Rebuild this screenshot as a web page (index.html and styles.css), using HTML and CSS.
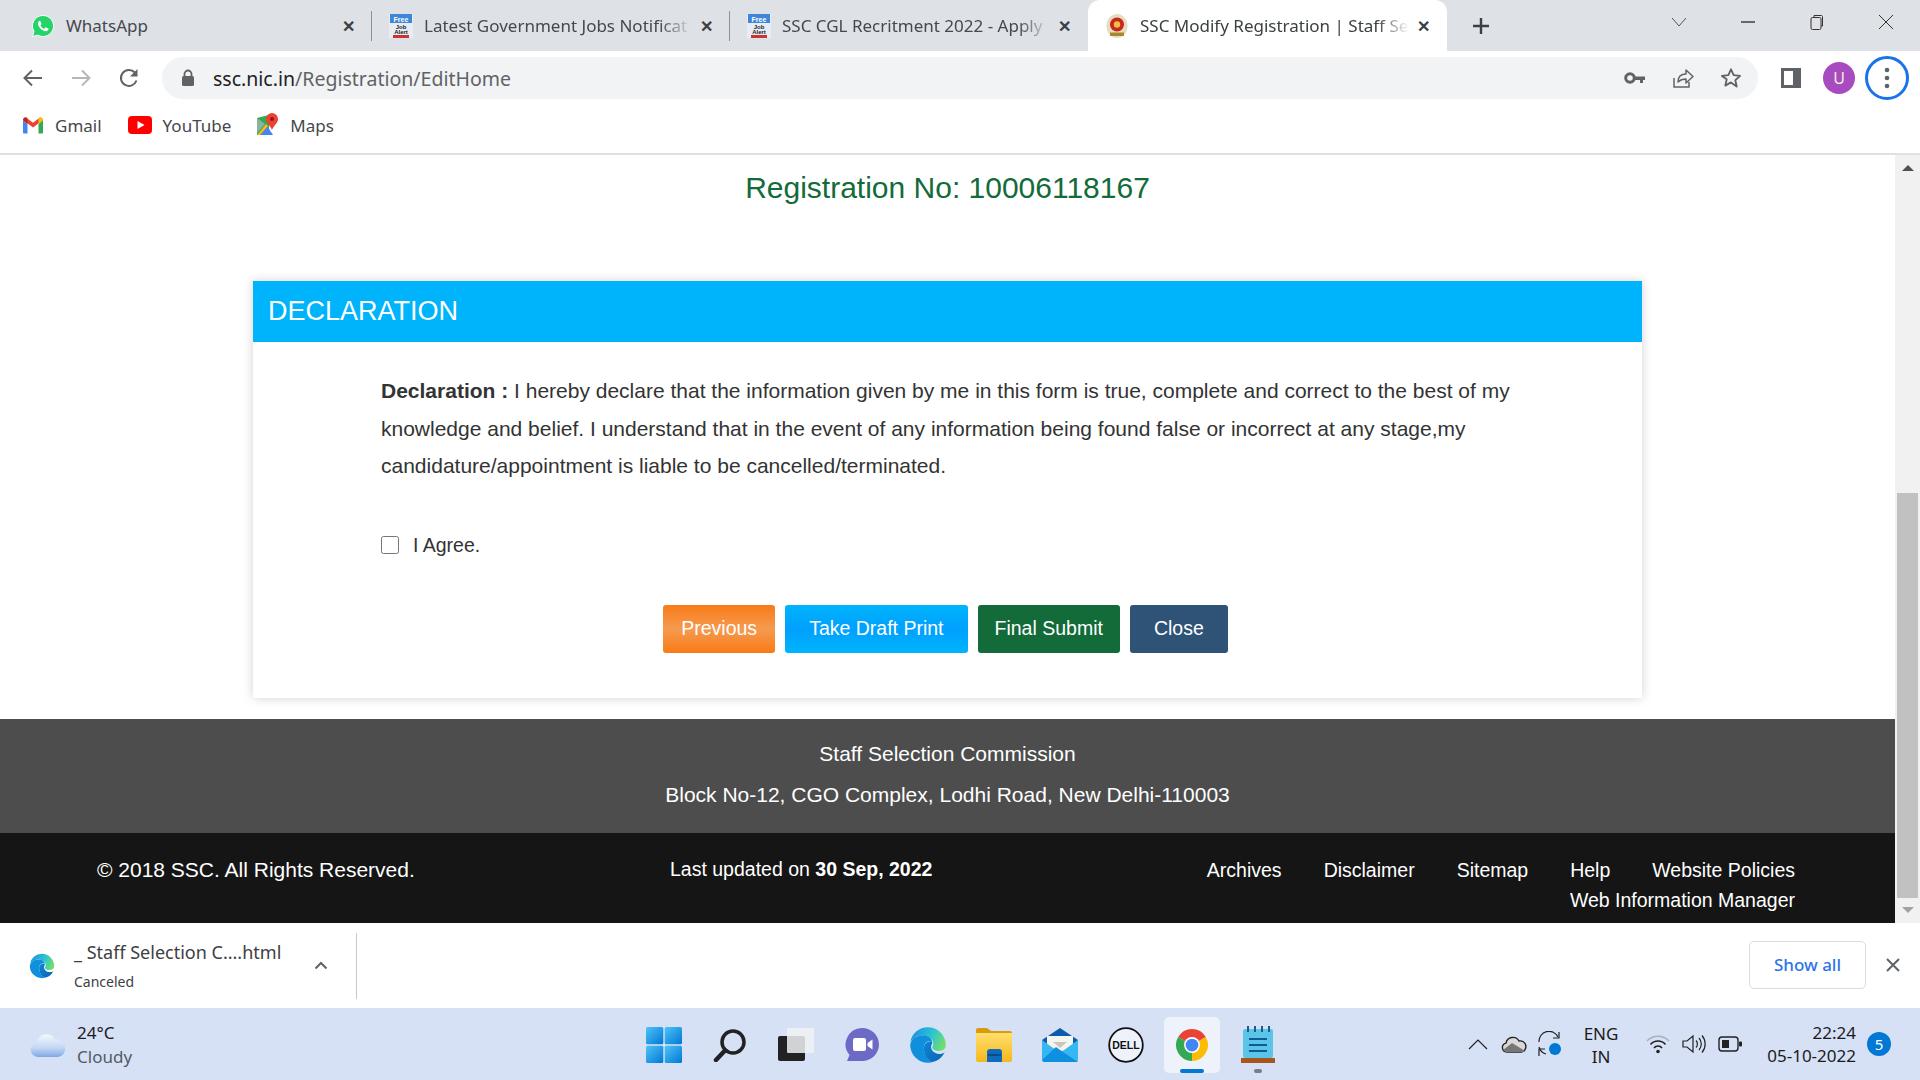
FILE: index.html
```html
<!DOCTYPE html>
<html lang="en">

<head>
    <meta charset="UTF-8">
    <meta name="viewport" content="width=device-width, initial-scale=1.0">
    <title>SSC Modify Registration</title>
    <link rel="stylesheet" href="styles.css">
</head>

<body>
    <svg class="defs" width="0" height="0">
        <defs>
            <linearGradient id="edgeA" x1="0" y1="0.3" x2="1" y2="0.6">
                <stop offset="0" stop-color="#1b8fe0" />
                <stop offset="0.55" stop-color="#2cc4d4" />
                <stop offset="1" stop-color="#72de6a" />
            </linearGradient>
            <linearGradient id="edgeB" x1="0" y1="0" x2="1" y2="1">
                <stop offset="0" stop-color="#0d86d8" />
                <stop offset="1" stop-color="#0b63b5" />
            </linearGradient>
            <linearGradient id="winBlue" x1="0" y1="0" x2="1" y2="1">
                <stop offset="0" stop-color="#4fc3f7" />
                <stop offset="1" stop-color="#0078d4" />
            </linearGradient>
            <linearGradient id="folderY" x1="0" y1="0" x2="0" y2="1">
                <stop offset="0" stop-color="#ffdf6e" />
                <stop offset="1" stop-color="#f5b81c" />
            </linearGradient>
            <linearGradient id="cloudB" x1="0" y1="0" x2="0" y2="1">
                <stop offset="0" stop-color="#f4f7fd" />
                <stop offset="0.6" stop-color="#c3d6f3" />
                <stop offset="1" stop-color="#7fa8e6" />
            </linearGradient>
            <symbol id="jobs" viewBox="0 0 24 24">
                <rect width="24" height="24" fill="#e8edf5" />
                <rect x="1" y="0" width="22" height="9" fill="#3d86d8" />
                <text x="12" y="7.500" text-anchor="middle" class="fav-free">Free</text>
                <text x="12" y="14.500" text-anchor="middle" class="fav-job">Job</text>
                <text x="12" y="20" text-anchor="middle" class="fav-job">Alert</text>
                <rect x="4" y="21" width="16" height="3" fill="#c33" />
            </symbol>
            <symbol id="edge" viewBox="0 0 32 32">
                <path d="M16 1A15 15 0 0 1 31 16c0 3-2 5-6 5-3 0-5-1.500-5.500-3 .5-1 1-2 1-3 0-4-4-7-9-7-5 0-9 3-10.500 6A15 15 0 0 1 16 1z" fill="url(#edgeA)" />
                <path d="M1 16C2 10 7 8 12 8c4 0 7 2 7.500 5-3-1-7 .5-7 6 0 5 3 9 6.500 11.500-1 .3-2 .5-3 .5A15 15 0 0 1 1 16z" fill="#0f8fdc" />
                <path d="M12.500 19c0-5 4-6.500 7-6 .5 2-1 3-1 4.500 0 3 3 6 7 6 2 0 3.500-.5 4.500-1.500A15 15 0 0 1 19 30.500C15 28 12.500 24 12.500 19z" fill="url(#edgeB)" />
            </symbol>
        </defs>
    </svg>

    <header class="tabstrip">
        <div class="tab">
            <svg class="favicon" viewBox="0 0 24 24">
                <path d="M12 1.500A10.500 10.500 0 0 0 3 17.400L1.500 22.500l5.300-1.400A10.500 10.500 0 1 0 12 1.500z" fill="#25d366" stroke="#fff" stroke-width="1" />
                <path d="M8.500 6.800c-.7.300-1.500 1.300-1.500 2.700 0 3 3.800 7.500 7.800 7.700 1.400 0 2.500-1 2.700-1.900.1-.5 0-.8-.2-.9l-2.200-1c-.3-.1-.5 0-.7.200l-.8 1c-.2.200-.4.200-.7.100-1.300-.5-2.600-1.600-3.300-2.900-.1-.3 0-.5.200-.7l.6-.8c.1-.2.100-.4 0-.6l-.9-2.300c-.2-.5-.5-.6-1-.6z" fill="#fff" />
            </svg>
            <span class="tab-title">WhatsApp</span>
            <span class="tab-close">✕</span>
        </div>
        <div class="tab">
            <svg class="favicon"><use href="#jobs" /></svg>
            <span class="tab-title fade">Latest Government Jobs Notificat</span>
            <span class="tab-close">✕</span>
        </div>
        <div class="tab no-sep">
            <svg class="favicon"><use href="#jobs" /></svg>
            <span class="tab-title fade">SSC CGL Recritment 2022 - Apply</span>
            <span class="tab-close">✕</span>
        </div>
        <div class="tab active">
            <svg class="favicon" viewBox="0 0 24 24">
                <ellipse cx="12" cy="12" rx="10.500" ry="12" fill="#e6dcc0" />
                <circle cx="12" cy="10.500" r="7" fill="#c8281e" />
                <circle cx="12" cy="10.500" r="3.200" fill="#f0c040" />
                <rect x="5" y="18.500" width="14" height="3.500" fill="#a8872f" />
            </svg>
            <span class="tab-title fade">SSC Modify Registration | Staff Se</span>
            <span class="tab-close">✕</span>
        </div>
        <div class="new-tab">
            <svg width="18" height="18" viewBox="0 0 18 18">
                <path d="M9 1v16M1 9h16" stroke="#3c4043" stroke-width="2.400" fill="none" />
            </svg>
        </div>
        <div class="win-controls">
            <div class="win-btn">
                <svg width="16" height="10" viewBox="0 0 16 10"><path d="M1 1l7 8 7-8" stroke="#555" stroke-width="1" fill="none" /></svg>
            </div>
            <div class="win-btn">
                <svg width="16" height="4" viewBox="0 0 16 4"><path d="M1 2h14" stroke="#333" stroke-width="1.400" /></svg>
            </div>
            <div class="win-btn">
                <svg width="16" height="16" viewBox="0 0 16 16">
                    <path d="M5 3V1.500h7.500a1.500 1.500 0 0 1 1 1V12H12" stroke="#333" fill="none" />
                    <rect x="2" y="3.500" width="10" height="12" rx="1.500" stroke="#333" fill="none" />
                </svg>
            </div>
            <div class="win-btn">
                <svg width="16" height="16" viewBox="0 0 16 16"><path d="M1 1l14 14M15 1L1 15" stroke="#333" stroke-width="1" /></svg>
            </div>
        </div>
    </header>

    <nav class="toolbar">
        <div class="nav-btn">
            <svg width="22" height="22" viewBox="0 0 22 22"><path d="M20 11H3M10 3.500L2.500 11l7.500 7.500" stroke="#5f6368" stroke-width="2" fill="none" /></svg>
        </div>
        <div class="nav-btn">
            <svg width="22" height="22" viewBox="0 0 22 22"><path d="M2 11h17M12 3.500l7.500 7.500-7.500 7.500" stroke="#b4b7bb" stroke-width="2" fill="none" /></svg>
        </div>
        <div class="nav-btn">
            <svg width="22" height="22" viewBox="0 0 22 22">
                <path d="M18.500 13.500A8 8 0 1 1 16.800 5.500" stroke="#5f6368" stroke-width="2" fill="none" />
                <path d="M19.500 2v7.500H12z" fill="#5f6368" />
            </svg>
        </div>
        <div class="omnibox">
            <svg class="lock" width="14" height="18" viewBox="0 0 14 18">
                <path d="M3.500 8V5a3.500 3.500 0 0 1 7 0v3" stroke="#5f6368" stroke-width="1.800" fill="none" />
                <rect x="1" y="7" width="12" height="10" rx="1.500" fill="#5f6368" />
            </svg>
            <span class="url"><span class="url-host">ssc.nic.in</span>/Registration/EditHome</span>
            <div class="omni-actions">
                <div class="omni-btn">
                    <svg width="22" height="14" viewBox="0 0 22 14">
                        <circle cx="6" cy="7" r="4.300" stroke="#5f6368" stroke-width="3" fill="none" />
                        <path d="M10 5.500h11v3.500h-2v3h-3V9h-6z" fill="#5f6368" />
                    </svg>
                </div>
                <div class="omni-btn">
                    <svg width="22" height="22" viewBox="0 0 22 22">
                        <path d="M2 11v9h15v-5" stroke="#5f6368" stroke-width="1.500" fill="none" />
                        <path d="M6 15c0-5 3-8 8-8V3l7 6.500-7 6.500v-4c-3 0-6 1-8 3z" stroke="#5f6368" stroke-width="1.500" fill="none" stroke-linejoin="round" />
                    </svg>
                </div>
                <div class="omni-btn">
                    <svg width="22" height="22" viewBox="0 0 24 24">
                        <path d="M12 2.500l2.900 6.400 7 .8-5.200 4.700 1.500 6.900L12 16.800l-6.200 3.500 1.500-6.900L2.100 9.700l7-.8z" stroke="#5f6368" stroke-width="2" fill="none" stroke-linejoin="round" />
                    </svg>
                </div>
            </div>
        </div>
        <div class="tool-right">
            <div class="tool-btn">
                <svg width="20" height="20" viewBox="0 0 20 20">
                    <rect x="1.500" y="1.500" width="17" height="17" stroke="#5f6368" stroke-width="3" fill="none" />
                    <rect x="12" y="1" width="7" height="18" fill="#5f6368" />
                </svg>
            </div>
            <div class="tool-btn"><span class="avatar">U</span></div>
            <div class="tool-btn">
                <span class="menu-ring">
                    <svg width="6" height="22" viewBox="0 0 6 22">
                        <circle cx="3" cy="3" r="2.300" fill="#5f6368" />
                        <circle cx="3" cy="11" r="2.300" fill="#5f6368" />
                        <circle cx="3" cy="19" r="2.300" fill="#5f6368" />
                    </svg>
                </span>
            </div>
        </div>
    </nav>

    <div class="bookmarks">
        <div class="bookmark">
            <svg width="22" height="18" viewBox="0 0 22 18">
                <path d="M1 4v12.500a1 1 0 0 0 1 1h3.500V8z" fill="#4285f4" />
                <path d="M21 4v12.500a1 1 0 0 1-1 1h-3.500V8z" fill="#34a853" />
                <path d="M1 4l10 7.500L21 4l-3-2.500-7 5.300-7-5.300z" fill="#ea4335" />
                <path d="M1 4c0-2 2-3.500 3.500-2.500L5.500 2.500V8z" fill="#c5221f" />
                <path d="M21 4c0-2-2-3.500-3.500-2.500l-1 1V8z" fill="#fbbc04" />
            </svg>
            <span>Gmail</span>
        </div>
        <div class="bookmark">
            <svg width="24" height="18" viewBox="0 0 24 18">
                <rect width="24" height="18" rx="4" fill="#f00" />
                <path d="M9.500 5l7 4-7 4z" fill="#fff" />
            </svg>
            <span>YouTube</span>
        </div>
        <div class="bookmark">
            <svg width="22" height="24" viewBox="0 0 22 24">
                <path d="M0 5l12-3v20L0 22z" fill="#34a853" />
                <path d="M0 22l9-11 7 11z" fill="#4285f4" />
                <path d="M0 22L9 11 11 13 3 22z" fill="#fbbc04" />
                <path d="M0 5l8 6-8 9z" fill="#8ab4a0" />
                <path d="M15 0a6 6 0 0 1 6 6c0 4-4 6-6 11-2-5-6-7-6-11a6 6 0 0 1 6-6z" fill="#ea4335" />
                <circle cx="15" cy="6" r="2" fill="#a50e0e" />
            </svg>
            <span>Maps</span>
        </div>
    </div>

    <div class="viewport">
        <main class="page">
            <h2 class="reg-no">Registration No: 10006118167</h2>
            <section class="card">
                <h3 class="card-head">DECLARATION</h3>
                <div class="card-body">
                    <p class="declare"><b>Declaration :</b> I hereby declare that the information given by me in this form is true, complete and correct to the best of my knowledge and belief. I understand that in the event of any information being found false or incorrect at any stage,my candidature/appointment is liable to be cancelled/terminated.</p>
                    <label class="agree"><input type="checkbox"> I Agree.</label>
                    <div class="actions">
                        <a class="btn btn-orange">Previous</a>
                        <a class="btn btn-blue">Take Draft Print</a>
                        <a class="btn btn-green">Final Submit</a>
                        <a class="btn btn-navy">Close</a>
                    </div>
                </div>
            </section>
            <footer>
                <div class="address">
                    <div>Staff Selection Commission</div>
                    <div>Block No-12, CGO Complex, Lodhi Road, New Delhi-110003</div>
                </div>
                <div class="copyright">
                    <div>© 2018 SSC. All Rights Reserved.</div>
                    <div class="updated">Last updated on <b>30 Sep, 2022</b></div>
                    <div class="links">
                        <a>Archives</a>
                        <a>Disclaimer</a>
                        <a>Sitemap</a>
                        <a>Help</a>
                        <a>Website Policies</a>
                        <a>Web Information Manager</a>
                    </div>
                </div>
            </footer>
        </main>
        <div class="scrollbar">
            <span class="arrow-up"></span>
            <div class="track"><div class="thumb"></div></div>
            <span class="arrow-down"></span>
        </div>
    </div>

    <div class="downloads">
        <div class="dl-item">
            <svg width="26" height="26"><use href="#edge" /></svg>
            <div class="dl-text">
                <div class="dl-name">_ Staff Selection C....html</div>
                <div class="dl-status">Canceled</div>
            </div>
            <svg class="dl-caret" width="14" height="9" viewBox="0 0 14 9"><path d="M1.500 7.500L7 2l5.500 5.500" stroke="#5f6368" stroke-width="2" fill="none" /></svg>
        </div>
        <button class="show-all">Show all</button>
        <svg class="dl-close" width="14" height="14" viewBox="0 0 14 14"><path d="M1 1l12 12M13 1L1 13" stroke="#5f6368" stroke-width="2" /></svg>
    </div>

    <div class="taskbar">
        <div class="weather">
            <svg width="38" height="26" viewBox="0 0 38 26">
                <path d="M9 25a7.500 7.500 0 0 1-1.500-14.800A10 10 0 0 1 26 7.500a8.800 8.800 0 0 1 3 17.500z" fill="url(#cloudB)" />
            </svg>
            <div>
                <div class="temp">24°C</div>
                <div class="sky">Cloudy</div>
            </div>
        </div>
        <div class="apps">
            <div class="app">
                <svg width="36" height="36" viewBox="0 0 36 36">
                    <rect x="0" y="0" width="17.300" height="17.300" rx="1.500" fill="url(#winBlue)" />
                    <rect x="18.700" y="0" width="17.300" height="17.300" rx="1.500" fill="url(#winBlue)" />
                    <rect x="0" y="18.700" width="17.300" height="17.300" rx="1.500" fill="url(#winBlue)" />
                    <rect x="18.700" y="18.700" width="17.300" height="17.300" rx="1.500" fill="url(#winBlue)" />
                </svg>
            </div>
            <div class="app">
                <svg width="34" height="34" viewBox="0 0 34 34">
                    <circle cx="20" cy="14" r="11" stroke="#222" stroke-width="3.500" fill="none" />
                    <path d="M12 22.500L3 32" stroke="#222" stroke-width="4.500" stroke-linecap="round" />
                </svg>
            </div>
            <div class="app">
                <svg width="36" height="36" viewBox="0 0 36 36">
                    <rect x="0" y="9" width="27" height="25" rx="2" fill="#222" />
                    <rect x="9" y="1" width="27" height="25" rx="1" fill="#f0f1f3" fill-opacity="0.85" />
                </svg>
            </div>
            <div class="app">
                <svg width="36" height="36" viewBox="0 0 36 36">
                    <path d="M18 1a17 16.500 0 0 1 0 33H3l2.500-6A17 16.500 0 0 1 18 1z" fill="#6d69c7" />
                    <rect x="9" y="11" width="13" height="13" rx="2" fill="#fff" />
                    <path d="M23.500 16l5-3.500v10l-5-3.500z" fill="#fff" />
                </svg>
            </div>
            <div class="app">
                <svg width="38" height="38"><use href="#edge" /></svg>
            </div>
            <div class="app">
                <svg width="36" height="34" viewBox="0 0 36 34">
                    <path d="M0 2a2 2 0 0 1 2-2h9l4 3h19a2 2 0 0 1 2 2v4H0z" fill="#d99a0b" />
                    <path d="M0 5h36v27a2 2 0 0 1-2 2H2a2 2 0 0 1-2-2z" fill="url(#folderY)" />
                    <path d="M11 24a3 3 0 0 1 3-3h9a3 3 0 0 1 3 3v10H11z" fill="#0f6cbd" />
                    <rect x="12" y="26" width="13" height="2" fill="#0b4a8a" />
                </svg>
            </div>
            <div class="app">
                <svg width="36" height="34" viewBox="0 0 36 34">
                    <path d="M0 12L18 0l18 12v4H0z" fill="#0b5cab" />
                    <path d="M5 8h26v14H5z" fill="#f5f5f0" />
                    <path d="M11 14h14l-7 6z" fill="#c9c6bb" />
                    <path d="M0 12l18 13 18-13v20a2 2 0 0 1-2 2H2a2 2 0 0 1-2-2z" fill="#35b8f2" />
                    <path d="M0 32l14-13 4 3 18 12H2z" fill="#0f8fe0" />
                </svg>
            </div>
            <div class="app">
                <svg width="36" height="36" viewBox="0 0 36 36">
                    <circle cx="18" cy="18" r="16.800" stroke="#111" stroke-width="1.800" fill="#eef2fb" />
                    <text x="18" y="22" text-anchor="middle" class="dell-text">DELL</text>
                </svg>
            </div>
            <div class="app app-on">
                <svg width="34" height="34" viewBox="0 0 32 32">
                    <path d="M16 16L3 8.500A15 15 0 0 1 29 8.500z" fill="#ea4335" />
                    <path d="M16 16L29 8.500A15 15 0 0 1 16 31z" fill="#fbbc04" />
                    <path d="M16 16L16 31A15 15 0 0 1 3 8.500z" fill="#34a853" />
                    <circle cx="16" cy="16" r="7.500" fill="#fff" />
                    <circle cx="16" cy="16" r="6" fill="#4285f4" />
                </svg>
                <span class="app-bar"></span>
            </div>
            <div class="app app-run">
                <svg width="34" height="38" viewBox="0 0 34 38">
                    <rect x="2" y="3" width="30" height="29" rx="2" fill="#5ac5e8" />
                    <path d="M7 0v6M14 0v6M21 0v6M28 0v6" stroke="#1d5c86" stroke-width="2" />
                    <path d="M8 13h18M8 19h18M8 25h18" stroke="#0d5d92" stroke-width="2.200" />
                    <rect x="0" y="32" width="34" height="5" fill="#a8561c" />
                </svg>
                <span class="app-dot"></span>
            </div>
        </div>
        <div class="tray">
            <div class="tray-icon">
                <svg width="20" height="11" viewBox="0 0 20 11"><path d="M1 10l9-9 9 9" stroke="#222" stroke-width="1.200" fill="none" /></svg>
            </div>
            <div class="tray-icon">
                <svg width="26" height="18" viewBox="0 0 26 18">
                    <path d="M6 17a4.500 4.500 0 0 1-1-8.900A7 7 0 0 1 18 6a5.600 5.600 0 0 1 2.500 11z" fill="#d9d9d9" stroke="#222" stroke-width="1.400" />
                    <path d="M2 15l9-7 5 3 8 5v1H5z" fill="#777" />
                </svg>
            </div>
            <div class="tray-icon">
                <svg width="26" height="26" viewBox="0 0 26 26">
                    <path d="M2 11A10 10 0 0 1 21 6" stroke="#222" stroke-width="1.200" fill="none" />
                    <path d="M22 1v6h-6" stroke="#222" stroke-width="1.200" fill="none" />
                    <path d="M2 16a10 10 0 0 0 7 7" stroke="#222" stroke-width="1.200" fill="none" />
                    <path d="M2 25v-7h6" stroke="#222" stroke-width="1.200" fill="none" />
                    <circle cx="18" cy="18" r="6" fill="#0078d4" />
                </svg>
            </div>
            <div class="lang">ENG<br>IN</div>
            <div class="tray-icon">
                <svg width="24" height="20" viewBox="0 0 24 20">
                    <path d="M1 7a15 15 0 0 1 22 0" stroke="#aab0bb" stroke-width="1.500" fill="none" />
                    <path d="M4.500 10.500a10 10 0 0 1 15 0M8 14a5 5 0 0 1 8 0" stroke="#222" stroke-width="1.500" fill="none" />
                    <circle cx="12" cy="17.500" r="1.800" fill="#222" />
                </svg>
            </div>
            <div class="tray-icon">
                <svg width="24" height="20" viewBox="0 0 24 20">
                    <path d="M1 7h4l6-5v16l-6-5H1z" stroke="#222" stroke-width="1.200" fill="none" />
                    <path d="M14 6.500a5 5 0 0 1 0 7M17 4a9 9 0 0 1 0 12M20 1.500a13 13 0 0 1 0 17" stroke="#222" stroke-width="1.200" fill="none" />
                </svg>
            </div>
            <div class="tray-icon">
                <svg width="24" height="16" viewBox="0 0 24 16">
                    <rect x="1" y="1" width="19" height="14" rx="3" stroke="#222" stroke-width="1.400" fill="none" />
                    <rect x="4" y="4" width="7" height="8" fill="#222" />
                    <rect x="21" y="5.500" width="3" height="5" rx="1" fill="#222" />
                </svg>
            </div>
            <div class="clock">22:24<br>05-10-2022</div>
            <span class="badge">5</span>
        </div>
    </div>
</body>

</html>
```

FILE: styles.css
```css
* {
    box-sizing: border-box;
}

body {
    margin: 0;
    height: 1080px;
    overflow: hidden;
    display: flex;
    flex-direction: column;
    font-family: "Liberation Sans", Arial, sans-serif;
    background-color: #fff;
    color: #333;
}

.defs {
    position: absolute;
}

svg {
    display: block;
    flex-shrink: 0;
}

/* browser chrome */
.tabstrip {
    height: 51px;
    flex-shrink: 0;
    display: flex;
    padding-left: 14px;
    background-color: #dee1e6;
    font-family: "Noto Sans", sans-serif;
}

.tab {
    position: relative;
    width: 358px;
    display: flex;
    align-items: center;
    padding: 0 14px 0 17px;
    font-size: 17px;
    color: #45484c;
}

.tab::after {
    content: "";
    position: absolute;
    right: 0;
    top: 11px;
    bottom: 10px;
    width: 1px;
    background-color: #8f9398;
}

.tab.no-sep::after,
.tab.active::after {
    display: none;
}

.tab.active {
    width: 359px;
    background-color: #fff;
    border-radius: 12px 12px 0 0;
    color: #3c4043;
}

.favicon {
    width: 24px;
    height: 24px;
}

.tab-title {
    flex: 1;
    min-width: 0;
    margin: 0 4px 0 11px;
    white-space: nowrap;
    overflow: hidden;
}

.tab-title.fade {
    -webkit-mask-image: linear-gradient(to right, #000 88%, transparent 100%);
    mask-image: linear-gradient(to right, #000 88%, transparent 100%);
}

.fav-free {
    font-family: "Liberation Sans", sans-serif;
    font-size: 7px;
    font-weight: bold;
    fill: #fff;
}

.fav-job {
    font-family: "Liberation Sans", sans-serif;
    font-size: 6px;
    font-weight: bold;
    fill: #222;
}

.dell-text {
    font-family: "Liberation Sans", sans-serif;
    font-size: 10.500px;
    font-weight: bold;
    fill: #111;
}

.tab-close {
    width: 20px;
    text-align: center;
    font-size: 16px;
    font-weight: bold;
    color: #3c4043;
}

.new-tab {
    width: 32px;
    margin-left: 18px;
    display: flex;
    align-items: center;
    justify-content: center;
}

.win-controls {
    margin-left: auto;
    display: flex;
}

.win-btn {
    width: 69px;
    height: 44px;
    display: flex;
    align-items: center;
    justify-content: center;
}

.toolbar {
    height: 57px;
    flex-shrink: 0;
    display: flex;
    align-items: center;
    padding: 6px 0 9px 13px;
}

.nav-btn {
    width: 40px;
    margin-right: 8px;
    display: flex;
    justify-content: center;
}

.omnibox {
    width: 1596px;
    height: 42px;
    margin-left: 5px;
    display: flex;
    align-items: center;
    padding: 0 9px 0 19px;
    border-radius: 21px;
    background-color: #f1f3f4;
    font-family: "Noto Sans", sans-serif;
}

.lock {
    margin-right: 18px;
}

.url {
    font-size: 19.500px;
    color: #5f6368;
}

.url-host {
    color: #202124;
}

.omni-actions {
    margin-left: auto;
    display: flex;
    align-items: center;
    gap: 12px;
}

.omni-btn {
    width: 36px;
    display: flex;
    justify-content: center;
}

.tool-right {
    display: flex;
    margin-left: 9px;
}

.tool-btn {
    width: 48px;
    display: flex;
    justify-content: center;
    align-items: center;
}

.avatar {
    width: 32px;
    height: 32px;
    border-radius: 50%;
    background-color: #a94bc0;
    color: #eed;
    font-size: 16px;
    line-height: 32px;
    text-align: center;
    font-family: "Noto Sans", sans-serif;
}

.menu-ring {
    width: 44px;
    height: 44px;
    border: 3px solid #1a73e8;
    border-radius: 50%;
    display: flex;
    align-items: center;
    justify-content: center;
}

.bookmarks {
    height: 47px;
    flex-shrink: 0;
    display: flex;
    align-items: center;
    gap: 26px;
    padding: 0 0 11px 22px;
    border-bottom: 2px solid #e0e0e0;
    font-family: "Noto Sans", sans-serif;
    font-size: 17px;
    color: #45484c;
}

.bookmark {
    display: flex;
    align-items: center;
    gap: 11px;
}

/* page */
.viewport {
    height: 768px;
    flex-shrink: 0;
    display: flex;
}

.page {
    width: 1895px;
}

.reg-no {
    margin: 0 0 76px;
    padding-top: 16px;
    line-height: 34px;
    font-size: 30px;
    font-weight: normal;
    text-align: center;
    color: #126b39;
}

.card {
    width: 1389px;
    height: 417px;
    margin: 0 auto 21px;
    box-shadow: 0 0 10px rgba(0, 0, 0, 0.18);
}

.card-head {
    height: 61px;
    margin: 0;
    padding-left: 15px;
    background-color: #00b4fb;
    color: #fff;
    font-size: 27px;
    font-weight: normal;
    line-height: 60px;
}

.card-body {
    padding: 30px 128px 45px;
    font-size: 19.500px;
}

.declare {
    margin: 0;
    font-size: 21px;
    line-height: 37.500px;
}

.agree {
    display: flex;
    align-items: center;
    height: 24px;
    margin: 48.500px 0 48px;
}

.agree input {
    width: 18px;
    height: 18px;
    margin: 0 14px 0 0;
}

.actions {
    display: flex;
    justify-content: center;
    gap: 10px;
    padding-right: 4px;
}

.btn {
    height: 48px;
    padding: 0 17px;
    border-radius: 3px;
    color: #fff;
    line-height: 47px;
    cursor: pointer;
}

.btn-orange {
    padding: 0 18px;
    background: linear-gradient(#f97b16, #f59a50 50%, #f97b16);
}

.btn-blue {
    padding: 0 24px;
    background: linear-gradient(#00b4fb, #00a0ff 50%, #00b4fb);
}

.btn-green {
    background-color: #126b39;
}

.btn-navy {
    padding: 0 24px;
    background-color: #2e5377;
}

footer {
    color: #fff;
    font-size: 21px;
}

.address {
    height: 114px;
    padding-top: 14px;
    background-color: #4d4d4d;
    line-height: 41px;
    text-align: center;
}

.copyright {
    height: 90px;
    display: grid;
    grid-template-columns: 573px 1fr 620px;
    padding: 22px 100px 0 97px;
    background-color: #151515;
    line-height: 30px;
}

.updated {
    margin-top: -1px;
    font-size: 19.500px;
}

.links {
    display: flex;
    flex-wrap: wrap;
    justify-content: flex-end;
    align-content: flex-start;
    column-gap: 42px;
    font-size: 19.500px;
}

.scrollbar {
    width: 25px;
    display: flex;
    flex-direction: column;
    align-items: center;
    background-color: #f1f1f1;
}

.arrow-up {
    margin-top: 10px;
    border: 6px solid transparent;
    border-top: 0;
    border-bottom: 6px solid #505050;
}

.track {
    flex: 1;
    width: 100%;
    padding: 0 2px;
}

.thumb {
    height: 405px;
    margin-top: 322px;
    background-color: #c1c1c1;
}

.arrow-down {
    margin-bottom: 10px;
    border: 6px solid transparent;
    border-bottom: 0;
    border-top: 6px solid #a3a3a3;
}

/* download shelf */
.downloads {
    height: 85px;
    flex-shrink: 0;
    display: flex;
    align-items: center;
    padding-left: 29px;
    font-family: "Noto Sans", sans-serif;
    background-color: #fff;
}

.dl-item {
    width: 328px;
    height: 66px;
    display: flex;
    align-items: center;
    border-right: 1px solid #c8c8c8;
}

.dl-text {
    width: 240px;
    margin-left: 19px;
    margin-top: -2px;
}

.dl-name {
    font-size: 18px;
    line-height: 26px;
    color: #3c4043;
}

.dl-status {
    margin-top: 8px;
    font-size: 14px;
    line-height: 18px;
    color: #3c4043;
}

.dl-caret {
    margin-left: 0;
}

.show-all {
    width: 117px;
    height: 48px;
    margin-left: auto;
    margin-bottom: 2px;
    border: 1px solid #dadce0;
    border-radius: 5px;
    background-color: #fff;
    color: #2f74e6;
    font-family: "Noto Sans", sans-serif;
    font-size: 17px;
    font-weight: 500;
}

.dl-close {
    margin: 0 20px 2px;
}

/* windows taskbar */
.taskbar {
    height: 72px;
    flex-shrink: 0;
    display: flex;
    align-items: center;
    background-color: #d6e1f6;
    font-family: "Noto Sans", sans-serif;
    font-size: 17px;
    color: #1b1b1b;
}

.weather {
    width: 631px;
    display: flex;
    align-items: center;
    gap: 10px;
    padding: 2px 0 0 29px;
    line-height: 24px;
}

.sky {
    color: #555a62;
}

.apps {
    display: flex;
}

.app {
    position: relative;
    width: 66px;
    height: 56px;
    display: flex;
    align-items: center;
    justify-content: center;
    margin-top: 2px;
}

.app-on::before {
    content: "";
    position: absolute;
    left: 5px;
    right: 5px;
    top: 0;
    bottom: 0;
    border-radius: 5px;
    background-color: #eef2fb;
}

.app-on svg {
    position: relative;
}

.app-bar {
    position: absolute;
    left: 21px;
    bottom: 0;
    width: 24px;
    height: 4px;
    border-radius: 2px;
    background-color: #0078d4;
}

.app-dot {
    position: absolute;
    left: 29px;
    bottom: 0;
    width: 8px;
    height: 4px;
    border-radius: 2px;
    background-color: #7a7f88;
}

.tray {
    margin-left: auto;
    display: flex;
    align-items: center;
    padding-right: 29px;
}

.tray-icon {
    width: 36px;
    display: flex;
    justify-content: center;
}

.lang {
    width: 66px;
    margin-right: 6px;
    padding-top: 2px;
    text-align: center;
    line-height: 23px;
}

.clock {
    width: 108px;
    text-align: right;
    line-height: 23px;
}

.badge {
    width: 24px;
    height: 24px;
    margin-left: 11px;
    border-radius: 50%;
    background-color: #0078d4;
    color: #fff;
    font-size: 15px;
    line-height: 24px;
    text-align: center;
}
```
